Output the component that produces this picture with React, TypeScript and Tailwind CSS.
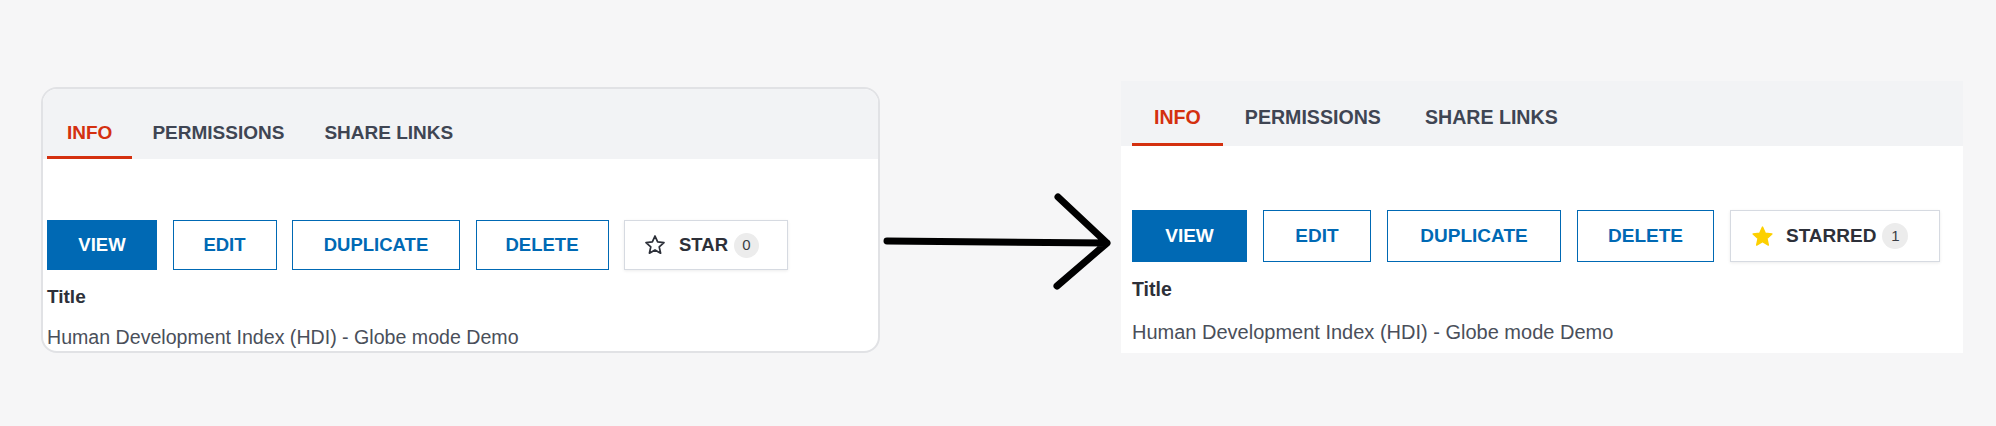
import React from "react";

const StarOutline = () => (
  <svg width="22" height="22" viewBox="0 0 24 24" fill="none">
    <polygon
      points="12,2.2 14.9,8.6 21.8,9.3 16.6,14 18.1,20.9 12,17.4 5.9,20.9 7.4,14 2.2,9.3 9.1,8.6"
      stroke="#2d3039"
      strokeWidth="1.9"
      strokeLinejoin="round"
    />
  </svg>
);

const StarFilled = () => (
  <svg width="23" height="23" viewBox="0 0 24 24">
    <polygon
      points="12,2.2 14.9,8.6 21.8,9.3 16.6,14 18.1,20.9 12,17.4 5.9,20.9 7.4,14 2.2,9.3 9.1,8.6"
      fill="#fdd000"
      stroke="#fdd000"
      strokeWidth="1.5"
      strokeLinejoin="round"
    />
  </svg>
);

function Tabs({ big }: { big?: boolean }) {
  const tab = big
    ? "h-[56px] px-[22px] flex items-center text-[19.6px] font-bold"
    : "h-[52px] px-[20px] flex items-center text-[19px] font-bold";
  return (
    <div
      className={
        big
          ? "bg-[#f2f3f5] h-[65px] flex items-end pl-[11px]"
          : "bg-[#f2f3f5] h-[70px] flex items-end pl-[4px]"
      }
    >
      <div className={tab + " text-[#d4300f] border-b-[3px] border-[#d4300f] pt-[3px]"}>INFO</div>
      <div className={tab + " text-[#3f4553]"}>PERMISSIONS</div>
      <div className={tab + " text-[#3f4553]"}>SHARE LINKS</div>
    </div>
  );
}

function Buttons({ big }: { big?: boolean }) {
  const h = big ? "h-[52px]" : "h-[50px]";
  const fs = big ? "text-[19px]" : "text-[18.5px]";
  const base = `${h} ${fs} font-bold flex items-center justify-center`;
  const outline = `${base} border-[1.5px] border-[#0069b4] text-[#0069b4] bg-white`;
  const w = big
    ? { view: "w-[115px]", edit: "w-[108px]", dup: "w-[174px]", del: "w-[137px]", star: "w-[210px]" }
    : { view: "w-[110px]", edit: "w-[104px]", dup: "w-[168px]", del: "w-[133px]", star: "w-[164px]" };
  return (
    <div className={big ? "flex gap-[16px]" : "flex gap-[15.5px]"}>
      <div className={`${base} ${w.view} bg-[#0069b4] text-white`}>VIEW</div>
      <div className={`${outline} ${w.edit}`}>EDIT</div>
      <div className={`${outline} ${w.dup}`}>DUPLICATE</div>
      <div className={`${outline} ${w.del}`}>DELETE</div>
      <div
        className={`${h} ${fs} ${w.star} font-bold flex items-center border-[1.5px] border-[#d6dae1] bg-white text-[#2d3039] shadow-[0_1px_3px_rgba(0,0,0,0.08)] ${
          big ? "pl-[20px]" : "pl-[19px]"
        }`}
      >
        {big ? <StarFilled /> : <StarOutline />}
        <span className={big ? "ml-[12px]" : "ml-[13px]"}>{big ? "STARRED" : "STAR"}</span>
        <span
          className={`ml-[6px] ${
            big ? "w-[26px] h-[26px]" : "w-[25px] h-[25px]"
          } rounded-full bg-[#ececec] text-[15px] font-normal text-[#3a3d44] flex items-center justify-center`}
        >
          {big ? "1" : "0"}
        </span>
      </div>
    </div>
  );
}

export default function App() {
  return (
    <div
      className="w-[1996px] h-[426px] bg-[#f6f6f7] flex items-start pl-[41px]"
      style={{ fontFamily: '"Liberation Sans", Arial, sans-serif' }}
    >
      {/* Left card */}
      <div className="mt-[87px] w-[839px] h-[266px] shrink-0 rounded-[16px] border-2 border-[#e1e2e5] bg-white overflow-hidden flex flex-col">
        <Tabs />
        <div className="pl-[4px] pt-[61px]">
          <Buttons />
          <div className="mt-[15px] text-[19px] leading-[24px] font-bold text-[#2d3039]">Title</div>
          <div className="mt-[16px] text-[19.6px] leading-[24px] text-[#4a4f5a]">
            Human Development Index (HDI) - Globe mode Demo
          </div>
        </div>
      </div>

      {/* Arrow */}
      <svg className="mt-[191px] shrink-0" width="241" height="100" viewBox="0 0 241 100">
        <path
          d="M7 50 L227 52 M178 6 L227 52 L177 95"
          stroke="#000"
          strokeWidth="7"
          strokeLinecap="round"
          strokeLinejoin="round"
          fill="none"
        />
      </svg>

      {/* Right panel */}
      <div className="mt-[81px] w-[842px] h-[272px] shrink-0 bg-white flex flex-col">
        <Tabs big />
        <div className="pl-[11px] pt-[64px]">
          <Buttons big />
          <div className="mt-[15px] text-[19.5px] leading-[24px] font-bold text-[#2d3039]">Title</div>
          <div className="mt-[19px] text-[20px] leading-[24px] text-[#4a4f5a]">
            Human Development Index (HDI) - Globe mode Demo
          </div>
        </div>
      </div>
    </div>
  );
}
